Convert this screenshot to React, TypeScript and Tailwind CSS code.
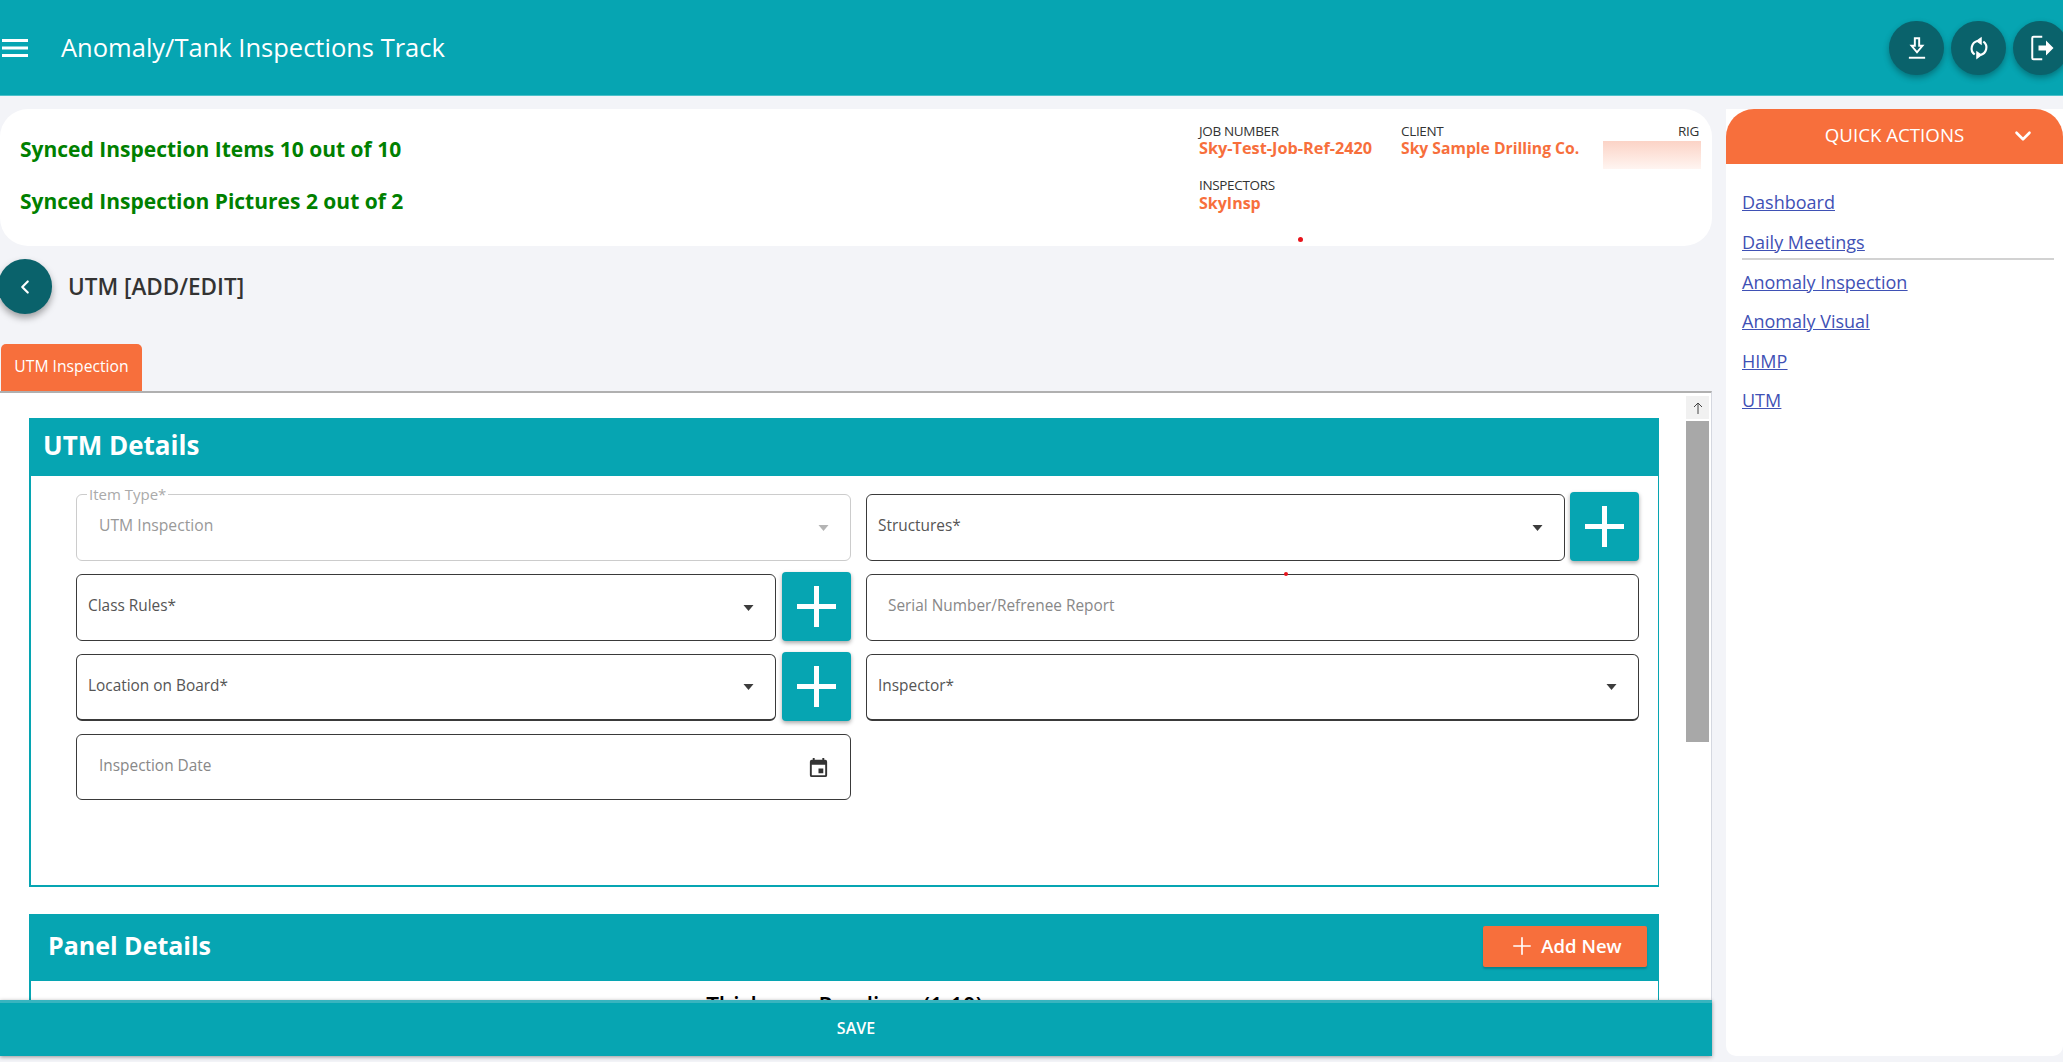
import { ChevronDown, ChevronLeft, Plus } from 'lucide-react';

const teal = 'bg-[#06a5b2]';

function Caret({ light }: { light?: boolean }) {
  return (
    <svg viewBox="0 0 10 6" className="h-[6px] w-[11px]">
      <path d="M0 0h10L5 6z" fill={light ? '#b4b4b4' : '#3c3c3c'} />
    </svg>
  );
}

function SelectField({ label, thick }: { label: string; thick?: boolean }) {
  return (
    <div className={`flex h-[67px] min-w-0 flex-1 items-center justify-between rounded-[6px] border border-[#3a3a3a] pr-[21px] pl-[11px] text-[15.4px] text-[#555] ${thick ? 'border-b-2' : ''}`}>
      <span className="-mt-[3px]">{label}</span>
      <Caret />
    </div>
  );
}

function AddButton() {
  return (
    <button className={`-mt-[2px] flex h-[69px] w-[69px] shrink-0 items-center justify-center rounded-[4px] ${teal} text-white shadow-[0_2px_4px_rgba(0,0,0,0.35)]`}>
      <svg viewBox="0 0 39 41" className="h-[41px] w-[39px]" fill="currentColor">
        <path d="M17 0h5v18h17v5H22v18h-5V23H0v-5h17z" />
      </svg>
    </button>
  );
}

function HeaderIcon({ children }: { children: React.ReactNode }) {
  return (
    <button className="flex h-[54px] w-[55px] shrink-0 items-center justify-center rounded-full bg-[#0a626b] text-white shadow-[0_3px_6px_rgba(0,0,0,0.3)]">
      {children}
    </button>
  );
}

const links = ['Dashboard', 'Daily Meetings', 'Anomaly Inspection', 'Anomaly Visual', 'HIMP', 'UTM'];

export default function App() {
  return (
    <div className="flex h-screen w-full flex-col overflow-hidden bg-[#f3f4f8] font-['Open_Sans',sans-serif]">
      <header className={`flex h-[96px] shrink-0 items-center border-b border-[#4cc0c9] ${teal} text-white`}>
        <svg viewBox="0 0 26 18" className="ml-[2px] h-[18px] w-[26px] shrink-0" fill="currentColor">
          <path d="M0 0h26v3H0zM0 7.5h26v3H0zM0 15h26v3H0z" />
        </svg>
        <h1 className="ml-[33px] text-[25.5px] leading-none">Anomaly/Tank Inspections Track</h1>
        <div className="mr-[-5px] ml-auto flex gap-[7px]">
          <HeaderIcon>
            <svg viewBox="0 0 24 24" className="h-[26px] w-[26px]" fill="none" stroke="currentColor" strokeWidth="1.8">
              <path d="M10 3h4v7h3l-5 6-5-6h3z" />
              <path d="M4.5 21h15" />
            </svg>
          </HeaderIcon>
          <HeaderIcon>
            <svg viewBox="0 0 24 24" className="h-[26px] w-[26px]" fill="none" stroke="currentColor" strokeWidth="2">
              <path d="M11 5.5A7 7 0 0 0 8 18" />
              <path d="M13 18.5A7 7 0 0 0 16 6" />
              <path d="M10 5.5 14 2.5v6z" fill="currentColor" strokeWidth="1" />
              <path d="M14 18.5 10 15.5v6z" fill="currentColor" strokeWidth="1" />
            </svg>
          </HeaderIcon>
          <HeaderIcon>
            <svg viewBox="0 0 24 24" className="h-[30px] w-[30px]" fill="none" stroke="currentColor" strokeWidth="1.6">
              <path d="M13 3H6a1 1 0 0 0-1 1v16a1 1 0 0 0 1 1h7" />
              <path d="M10 10h6V6l6 6-6 6v-4h-6z" fill="currentColor" stroke="none" />
            </svg>
          </HeaderIcon>
        </div>
      </header>

      <div className="flex min-h-0 flex-1 pt-[13px] pb-[6px]">
        <main className="relative flex w-[1712px] shrink-0 flex-col">
          <section className="flex h-[137px] shrink-0 justify-between rounded-[28px] bg-white pr-[11px] pl-[20px]">
            <div className="flex flex-col pt-[25px] text-[21px] leading-[30px] font-bold text-[#008000]">
              <div>Synced Inspection Items 10 out of 10</div>
              <div className="mt-[22px]">Synced Inspection Pictures 2 out of 2</div>
            </div>
            <div className="relative flex w-[502px] flex-col pt-[14px]">
              <div className="flex">
                <div className="w-[202px]">
                  <div className="text-[13.5px] leading-[16px] tracking-tight text-[#333]">JOB NUMBER</div>
                  <div className="text-[16.3px] leading-[18px] font-bold whitespace-nowrap text-[#f76f3c]">Sky-Test-Job-Ref-2420</div>
                </div>
                <div className="w-[200px]">
                  <div className="text-[13.5px] leading-[16px] tracking-tight text-[#333]">CLIENT</div>
                  <div className="text-[15.7px] leading-[18px] font-bold whitespace-nowrap text-[#f76f3c]">Sky Sample Drilling Co.</div>
                </div>
                <div className="flex w-[100px] flex-col items-end">
                  <div className="mr-[2px] text-[13.5px] leading-[16px] tracking-tight text-[#333]">RIG</div>
                  <div className="mt-[2px] h-[28px] w-[98px] bg-gradient-to-b from-[#fbd3c6] to-[#fff5f1]" />
                </div>
              </div>
              <div className="mt-[8px] text-[13.5px] leading-[16px] tracking-tight text-[#333]">INSPECTORS</div>
              <div className="text-[16px] leading-[20px] font-bold text-[#f76f3c]">SkyInsp</div>
              <span className="absolute top-[128px] left-[99px] h-[5px] w-[5px] rounded-full bg-[#e8141c]" />
            </div>
          </section>

          <div className="mt-[13px] flex h-[55px] shrink-0 items-center">
            <button className="-ml-[2px] flex h-[55px] w-[54px] items-center justify-center rounded-full bg-[#0a626b] text-white shadow-[0_4px_7px_rgba(0,0,0,0.35)]">
              <ChevronLeft size={22} strokeWidth={2.4} />
            </button>
            <h2 className="ml-[16px] text-[22.5px] font-semibold text-[#333]">UTM [ADD/EDIT]</h2>
          </div>

          <div className="mt-[30px] ml-px flex h-[47px] w-[141px] shrink-0 items-center justify-center rounded-t-[5px] bg-[#f76f3c] pb-[2px] text-[15.7px] text-white">
            UTM Inspection
          </div>

          <div className="flex min-h-0 flex-1 overflow-hidden border-t-2 border-r border-[#b0b0b0] border-r-[#d5d8e0] bg-white">
            <div className="w-[1659px] shrink-0 pt-[25px] pl-[29px]">
              <div className="h-[469px] border-r border-b-2 border-l-2 border-[#06a5b2]">
                <div className={`-mx-px flex h-[58px] items-center pb-[3px] pl-[13px] text-[26px] font-bold text-white ${teal}`}>UTM Details</div>
                <div className="relative grid grid-cols-[775px_773px] gap-x-[15px] gap-y-[13px] pt-[18px] pl-[45px]">
                  <div className="relative flex h-[67px] items-center justify-between rounded-[6px] border border-[#ccc] pr-[21px] pl-[22px] text-[15.7px] text-[#999]">
                    <span className="absolute -top-[10px] left-[10px] bg-white px-[2px] text-[15px] leading-[18px] text-[#aaa]">Item Type*</span>
                    <span className="-mt-[3px]">UTM Inspection</span>
                    <Caret light />
                  </div>
                  <div className="flex gap-[5px]">
                    <SelectField label="Structures*" />
                    <AddButton />
                  </div>

                  <div className="flex gap-[6px]">
                    <SelectField label="Class Rules*" />
                    <AddButton />
                  </div>
                  <div className="relative flex h-[67px] items-center rounded-[6px] border border-[#3a3a3a] pl-[21px] text-[15.4px] text-[#888]">
                    <span className="-mt-[3px]">Serial Number/Refrenee Report</span>
                    <span className="absolute -top-[3px] left-[417px] h-[4px] w-[4px] rounded-full bg-[#e8141c]" />
                  </div>

                  <div className="flex gap-[6px]">
                    <SelectField label="Location on Board*" thick />
                    <AddButton />
                  </div>
                  <SelectField label="Inspector*" thick />

                  <div className="flex h-[66px] items-center justify-between rounded-[6px] border border-[#3a3a3a] pr-[20px] pl-[22px] text-[15.4px] text-[#888]">
                    <span className="-mt-[3px]">Inspection Date</span>
                    <svg viewBox="0 0 24 24" className="h-[23px] w-[23px]" fill="#333">
                      <path d="M19 4h-1V2h-2v2H8V2H6v2H5a2 2 0 0 0-2 2v14a2 2 0 0 0 2 2h14a2 2 0 0 0 2-2V6a2 2 0 0 0-2-2zm0 16H5V9h14v11zm-7-7h5v5h-5z" />
                    </svg>
                  </div>
                </div>
              </div>

              <div className="mt-[27px] border-r border-l-2 border-[#06a5b2]">
                <div className={`-mx-px flex h-[67px] items-center justify-between pr-[12px] pb-[3px] pl-[18px] ${teal}`}>
                  <span className="text-[25px] font-bold text-white">Panel Details</span>
                  <button className="mt-[1px] flex h-[41px] w-[164px] items-center justify-center gap-[5px] rounded-[2px] bg-[#f76f3c] pb-[2px] text-[18.5px] font-semibold text-white shadow-[0_2px_2px_rgba(0,0,0,0.2)]">
                    <Plus size={28} strokeWidth={1.4} />
                    Add New
                  </button>
                </div>
                <div className="pt-[8px] text-center text-[22.5px] font-semibold text-black">Thickness Readings (1-10)</div>
              </div>
            </div>

            <div className="ml-[27px] flex w-[23px] shrink-0 flex-col pt-[3px]">
              <div className="flex h-[23px] items-center justify-center bg-[#f1f1f1] text-[#444]">
                <svg viewBox="0 0 12 12" className="h-[12px] w-[12px]" fill="none" stroke="currentColor" strokeWidth="1">
                  <path d="M6 12V1M2 5l4-4 4 4" />
                </svg>
              </div>
              <div className="mt-[2px] h-[321px] bg-[#a8a8a8]" />
            </div>
          </div>

          <button className={`absolute bottom-0 left-0 flex h-[56px] w-full items-center justify-center border-t-[3px] border-[#38b4bf] pb-[4px] ${teal} text-[16px] font-semibold text-white shadow-[0_1px_4px_rgba(0,0,0,0.4)]`}>
            SAVE
          </button>
        </main>

        <aside className="ml-[14px] min-w-0 flex-1 rounded-b-[10px] bg-white">
          <div className="relative flex h-[55px] items-center justify-center rounded-t-[28px] bg-[#f76f3c] pb-[2px] text-[18.7px] text-white">
            QUICK ACTIONS
            <ChevronDown size={26} strokeWidth={2.4} className="absolute right-[27px]" />
          </div>
          <nav className="flex flex-col pt-[19px] pr-[9px] pl-[16px] text-[18px] leading-[39.5px] text-[#3f51b5] underline">
            {links.map((link) => (
              <a key={link} href="#" className={link === 'Daily Meetings' ? 'mb-[3px] h-[37px] border-b-2 border-[#d2d2d2]' : ''}>
                {link}
              </a>
            ))}
          </nav>
        </aside>
      </div>
    </div>
  );
}
